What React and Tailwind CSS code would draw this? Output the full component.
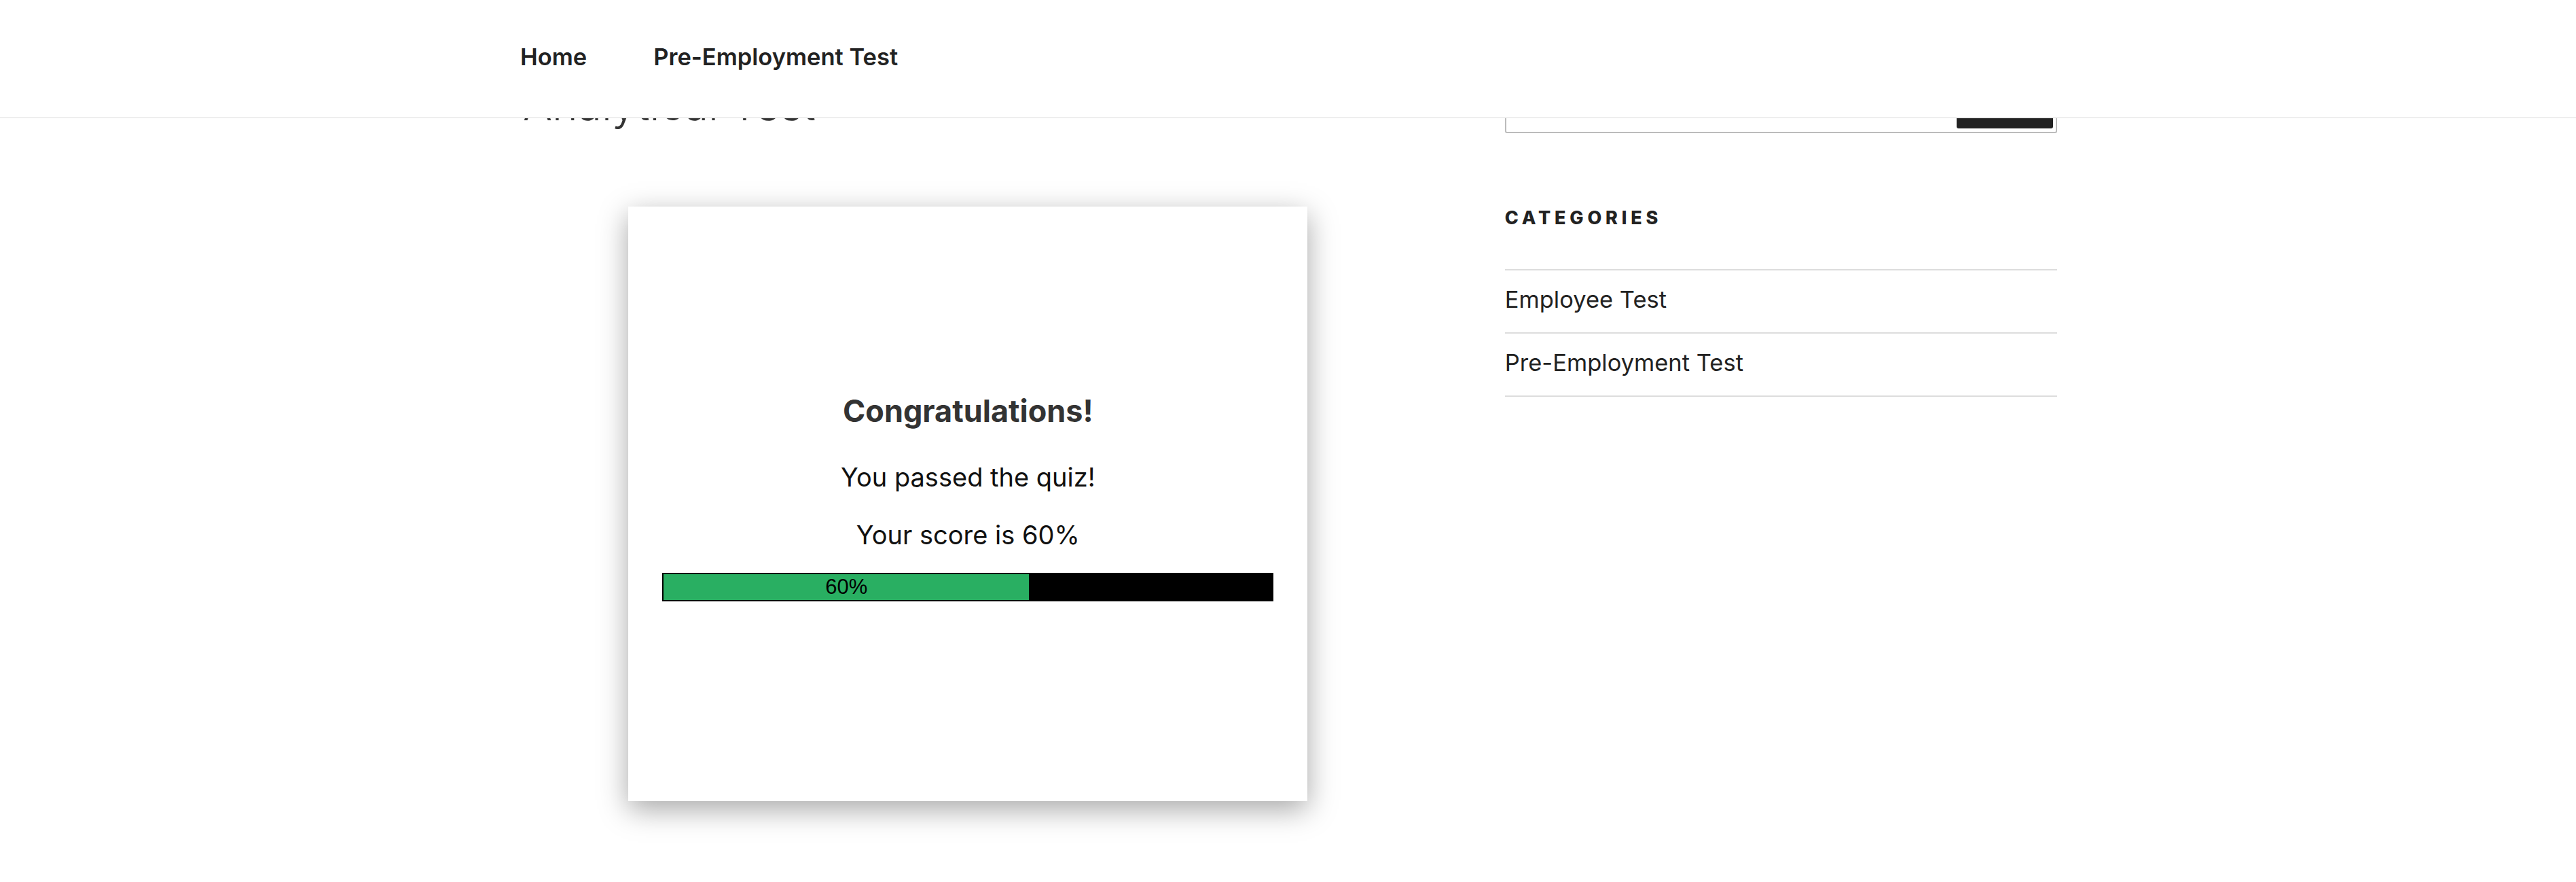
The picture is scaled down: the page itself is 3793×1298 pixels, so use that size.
import React from "react";

const score = 60;

function Header() {
  return (
    <header className="absolute top-0 left-0 right-0 z-10 h-[174px] bg-white border-b-2 border-[#eeeeee]">
      <nav className="mx-auto w-[2265px] pl-[2px] pt-[61px] flex gap-[98px] text-[34.5px] leading-[45px] font-semibold text-[#222222]">
        <a href="#">Home</a>
        <a href="#">Pre-Employment Test</a>
      </nav>
    </header>
  );
}

function ResultCard() {
  return (
    <div className="mx-auto w-[1000px] h-[875px] bg-white pt-[274px] px-[50px] shadow-[0_12px_40px_rgba(0,0,0,0.35)] text-center">
      <h2 className="text-[45px] leading-[54px] font-bold text-[#333333]">Congratulations!</h2>
      <p className="mt-[46px] text-[38px] leading-[48px] text-[#111111]">You passed the quiz!</p>
      <p className="mt-[37px] text-[38px] leading-[48px] text-[#111111]">Your score is {score}%</p>
      <div className="mt-[32px] h-[42px] border-2 border-black bg-black">
        <div
          className="h-full bg-[#29af62] flex items-center justify-center font-['Liberation_Sans',Arial,sans-serif] text-[31px] text-black"
          style={{ width: `${score}%` }}
        >
          {score}%
        </div>
      </div>
    </div>
  );
}

function Sidebar() {
  return (
    <aside className="w-[814px]">
      {/* search widget, mostly hidden under the header */}
      <form className="mt-[100px] h-[96px] border-2 border-[#bbbbbb] rounded-[3px] flex justify-end pt-[4px] pr-[4px] pb-[5px]">
        <button type="button" className="w-[142px] bg-[#222222] rounded-[3px]"></button>
      </form>
      <section className="mt-[111px]">
        <h2 className="text-[27px] leading-[27px] font-extrabold tracking-[0.215em] text-[#222222]">CATEGORIES</h2>
        <ul className="mt-[62px] border-t-2 border-[#dddddd] text-[34.5px] leading-[40px] text-[#222222]">
          <li className="pt-[23px] pb-[28px] border-b-2 border-[#dddddd]">
            <a href="#">Employee Test</a>
          </li>
          <li className="pt-[23px] pb-[28px] border-b-2 border-[#dddddd]">
            <a href="#">Pre-Employment Test</a>
          </li>
        </ul>
      </section>
    </aside>
  );
}

export default function App() {
  return (
    <div className="relative min-h-[1298px] bg-white font-['Inter','Liberation_Sans',sans-serif] overflow-hidden">
      <Header />
      <div className="mx-auto w-[2265px] flex gap-[129px]">
        <main className="w-[1324px]">
          <h1 className="pt-[118px] pl-[6px] text-[64px] leading-[72px] font-light text-[#333333]">Analytical Test</h1>
          <div className="mt-[114px]">
            <ResultCard />
          </div>
        </main>
        <Sidebar />
      </div>
    </div>
  );
}
